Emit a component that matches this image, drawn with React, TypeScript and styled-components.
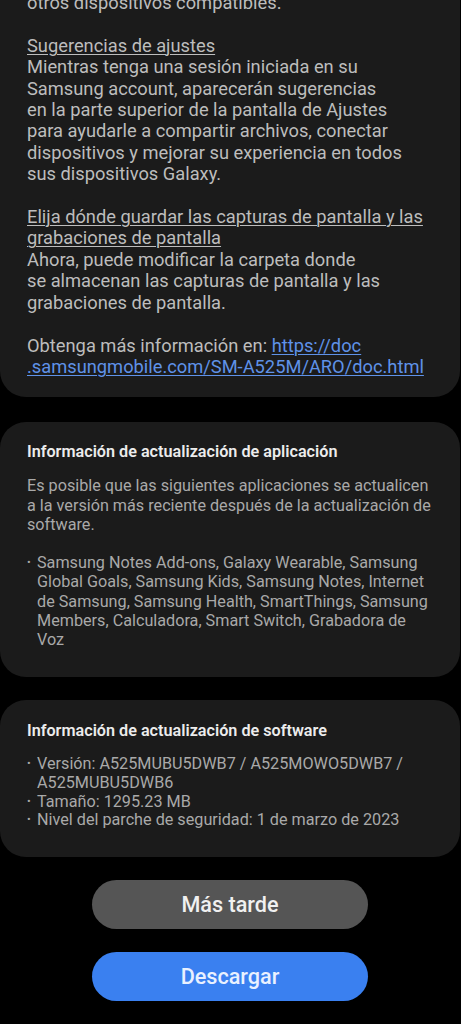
import React from "react";
import styled, { createGlobalStyle } from "styled-components";

const Global = createGlobalStyle`
  html, body { margin: 0; padding: 0; background: #000; }
  body { font-family: Roboto, "Noto Sans", "Liberation Sans", sans-serif; -webkit-font-smoothing: antialiased; }
  #root { height: 1024px; overflow: hidden; }
`;

const Page = styled.div`
  display: flex;
  flex-direction: column;
  width: 460px;
  margin-top: -40px;
`;

const Card = styled.section<{ $top: number; $bottom: number; $gap: number }>`
  background: #1b1b1b;
  border-radius: 26px;
  padding: ${(p) => p.$top}px 27px ${(p) => p.$bottom}px 27px;
  margin-bottom: ${(p) => p.$gap}px;
`;

const Notes = styled.div`
  font-size: 18.3px;
  line-height: 21.4px;
  color: #bdbdbd;
  white-space: pre-line;
`;

const Underlined = styled.span`
  text-decoration: underline;
  text-underline-offset: 2px;
  text-decoration-thickness: 1px;
`;

const Link = styled.a`
  color: #5f92e8;
  text-decoration: underline;
  text-underline-offset: 2px;
  text-decoration-thickness: 1px;
`;

const Title = styled.h2`
  margin: 0;
  font-size: 16.2px;
  font-weight: 600;
  line-height: 20px;
  color: #ececec;
`;

const Body = styled.div<{ $lh: number; $mt: number }>`
  margin-top: ${(p) => p.$mt}px;
  font-size: 16.2px;
  line-height: ${(p) => p.$lh}px;
  color: #a9a9a9;
`;

const Para = styled.p`
  margin: 0;
`;

const Bullets = styled.ul<{ $mt: number }>`
  list-style: none;
  margin: ${(p) => p.$mt}px 0 0 0;
  padding: 0;
`;

const Bullet = styled.li`
  display: flex;
  &::before {
    content: "•";
    flex: 0 0 10px;
    font-size: 11px;
  }
`;

const Actions = styled.div`
  display: flex;
  flex-direction: column;
  align-items: center;
  gap: 23px;
`;

const Button = styled.button<{ $primary?: boolean }>`
  width: 276px;
  height: 49px;
  border: none;
  border-radius: 25px;
  background: ${(p) => (p.$primary ? "#3a80f0" : "#555555")};
  color: ${(p) => (p.$primary ? "#e9f1ff" : "#f0f0f0")};
  font-family: Roboto, "Noto Sans", sans-serif;
  font-size: 21.6px;
  font-weight: 500;
  padding: 0;
`;

export default function App() {
  return (
    <>
      <Global />
      <Page>
        <Card $top={32} $bottom={20} $gap={25}>
          <Notes>
            {"otros dispositivos compatibles.\n\n"}
            <Underlined>Sugerencias de ajustes</Underlined>
            {"\nMientras tenga una sesión iniciada en su\nSamsung account, aparecerán sugerencias\nen la parte superior de la pantalla de Ajustes\npara ayudarle a compartir archivos, conectar\ndispositivos y mejorar su experiencia en todos\nsus dispositivos Galaxy.\n\n"}
            <Underlined>{"Elija dónde guardar las capturas de pantalla y las\ngrabaciones de pantalla"}</Underlined>
            {"\nAhora, puede modificar la carpeta donde\nse almacenan las capturas de pantalla y las\ngrabaciones de pantalla.\n\nObtenga más información en: "}
            <Link href="#">{"https://doc\n.samsungmobile.com/SM-A525M/ARO/doc.html"}</Link>
          </Notes>
        </Card>

        <Card $top={20} $bottom={28} $gap={23}>
          <Title>Información de actualización de aplicación</Title>
          <Body $lh={19.2} $mt={14}>
            <Para>
              Es posible que las siguientes aplicaciones se actualicen a la versión más reciente después de la actualización de software.
            </Para>
            <Bullets $mt={19.2}>
              <Bullet>
                Samsung Notes Add-ons, Galaxy Wearable, Samsung Global Goals, Samsung Kids, Samsung Notes, Internet de Samsung, Samsung Health, SmartThings, Samsung Members, Calculadora, Smart Switch, Grabadora de Voz
              </Bullet>
            </Bullets>
          </Body>
        </Card>

        <Card $top={21} $bottom={27} $gap={23}>
          <Title>Información de actualización de software</Title>
          <Body $lh={18.7} $mt={14}>
            <Bullets $mt={0}>
              <Bullet>Versión: A525MUBU5DWB7 / A525MOWO5DWB7 / A525MUBU5DWB6</Bullet>
              <Bullet>Tamaño: 1295.23 MB</Bullet>
              <Bullet>Nivel del parche de seguridad: 1 de marzo de 2023</Bullet>
            </Bullets>
          </Body>
        </Card>

        <Actions>
          <Button>Más tarde</Button>
          <Button $primary>Descargar</Button>
        </Actions>
      </Page>
    </>
  );
}
